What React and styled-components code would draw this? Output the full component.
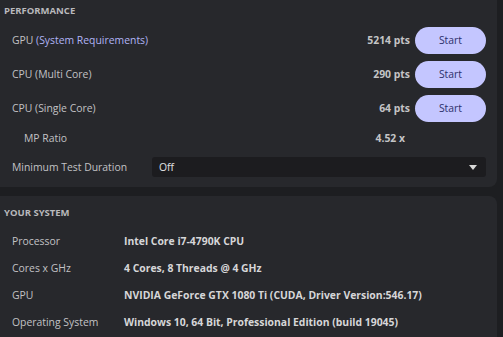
import React from 'react';
import styled, { createGlobalStyle } from 'styled-components';

const GlobalStyle = createGlobalStyle`
  html, body {
    margin: 0;
    padding: 0;
    background: #1d1e21;
    font-family: "Open Sans", "Noto Sans", sans-serif;
    overflow: hidden;
  }
`;

const perfRows = [
  { label: 'GPU', extra: '(System Requirements)', score: '5214 pts' },
  { label: 'CPU (Multi Core)', score: '290 pts' },
  { label: 'CPU (Single Core)', score: '64 pts' },
];

const systemRows = [
  ['Processor', 'Intel Core i7-4790K CPU'],
  ['Cores x GHz', '4 Cores, 8 Threads @ 4 GHz'],
  ['GPU', 'NVIDIA GeForce GTX 1080 Ti (CUDA, Driver Version:546.17)'],
  ['Operating System', 'Windows 10, 64 Bit, Professional Edition (build 19045)'],
];

function App() {
  return (
    <Page>
      <GlobalStyle />
      <Panel top>
        <Heading gap={3}>PERFORMANCE</Heading>
        {perfRows.map((r) => (
          <PerfRow key={r.label}>
            <Label>
              {r.label}
              {r.extra && <LinkText> {r.extra}</LinkText>}
            </Label>
            <Score>{r.score}</Score>
            <StartButton>Start</StartButton>
          </PerfRow>
        ))}
        <RatioRow>
          <Label indent>MP Ratio</Label>
          <Score>4.52 x</Score>
        </RatioRow>
        <DurationRow>
          <Label>Minimum Test Duration</Label>
          <Select>
            <span>Off</span>
            <svg width="8" height="5" viewBox="0 0 8 5">
              <path d="M0 0h8L4 5z" fill="#d8d8d8" />
            </svg>
          </Select>
        </DurationRow>
      </Panel>
      <Panel>
        <Heading gap={5}>YOUR SYSTEM</Heading>
        {systemRows.map(([k, v]) => (
          <SysRow key={k}>
            <Label>{k}</Label>
            <Value>{v}</Value>
          </SysRow>
        ))}
      </Panel>
    </Page>
  );
}

const Page = styled.div`
  width: 503px;
  height: 337px;
  display: flex;
  flex-direction: column;
  gap: 9px;
  padding-right: 6px;
  box-sizing: border-box;
`;

const Panel = styled.section`
  background: #27282c;
  border-radius: ${({ top }) => (top ? '0 0 8px 0' : '0 8px 0 0')};
  padding: ${({ top }) => (top ? '2px 11px 4px 4px' : '8px 11px 0 4px')};
  flex: ${({ top }) => (top ? '0 0 auto' : '1 1 auto')};
`;

const Heading = styled.div`
  font-size: 9.5px;
  font-weight: 700;
  color: #b9b9bc;
  height: 18px;
  line-height: 18px;
  margin-bottom: ${({ gap }) => gap}px;
`;

const PerfRow = styled.div`
  display: flex;
  align-items: center;
  height: 34px;
  padding-left: 8px;
`;

const Label = styled.div`
  flex: 0 0 auto;
  font-size: 10.4px;
  color: #c2c2c5;
  padding-left: ${({ indent }) => (indent ? '12px' : '0')};
`;

const LinkText = styled.span`
  color: #b0b4f4;
`;

const Score = styled.div`
  margin-left: auto;
  font-size: 10.4px;
  font-weight: 700;
  color: #c4c4c6;
  padding-right: 5px;
`;

const StartButton = styled.button`
  width: 71px;
  height: 27px;
  border: none;
  border-radius: 14px;
  background: #c4c6ff;
  color: #2c306a;
  font-family: inherit;
  font-size: 10.4px;
  padding: 0;
  cursor: pointer;
`;

const RatioRow = styled(PerfRow)`
  height: 26px;
  padding-right: 76px;
`;

const DurationRow = styled.div`
  display: flex;
  align-items: center;
  height: 32px;
  padding-left: 8px;
`;

const Select = styled.div`
  margin-left: auto;
  width: 334px;
  height: 20px;
  box-sizing: border-box;
  background: #1c1c1f;
  border-radius: 3px;
  display: flex;
  align-items: center;
  justify-content: space-between;
  padding: 0 9px 0 7px;
  font-size: 10.4px;
  color: #e2e2e4;
`;

const SysRow = styled.div`
  display: flex;
  align-items: center;
  height: 27px;
  padding-left: 8px;
  ${Label} {
    width: 112px;
  }
`;

const Value = styled.div`
  font-size: 10.4px;
  font-weight: 700;
  color: #d6d6d8;
  white-space: nowrap;
`;

export default App;
